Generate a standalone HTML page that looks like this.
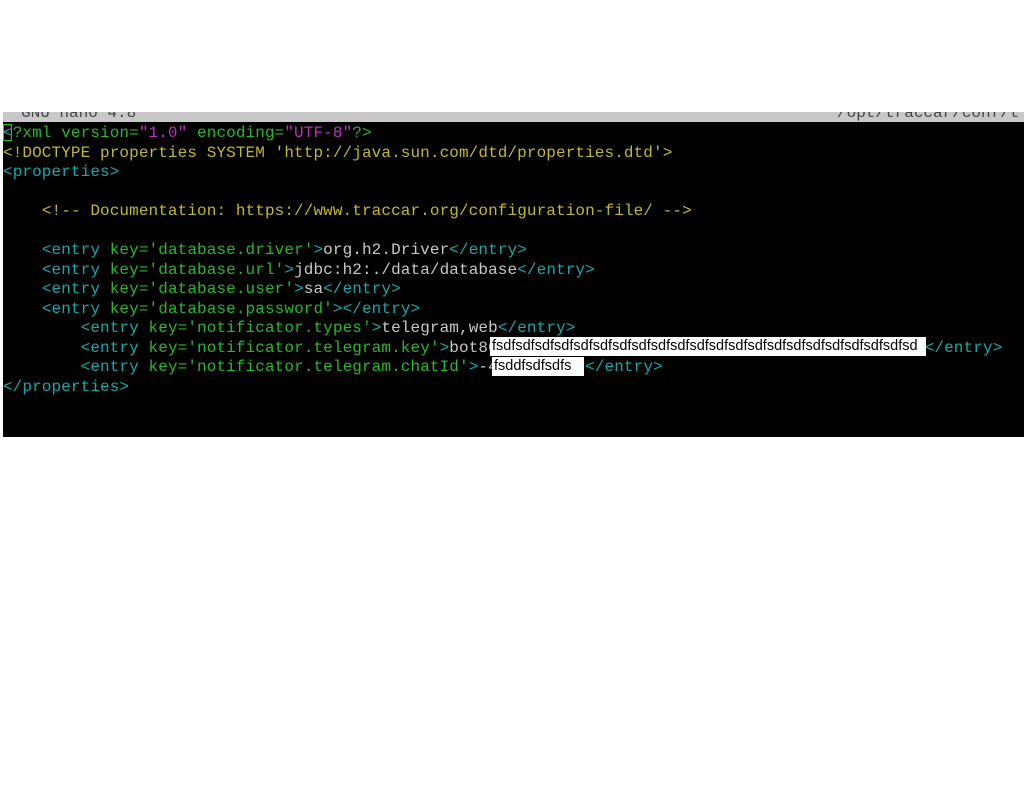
<!DOCTYPE html>
<html><head><meta charset="utf-8"><style>
body{margin:0;width:1024px;height:791px;background:#fff;position:relative;overflow:hidden}
#bar{position:absolute;left:3px;top:112px;width:1021px;height:10px;background:#c8c8c8;overflow:hidden}
#bar span{position:absolute;top:-8px;font:16px "Liberation Mono",monospace;color:#444}
#term{position:absolute;left:3px;top:122px;width:1021px;height:315px;background:#000}
pre{margin:0;position:absolute;left:3px;top:124px;font:16px/19.5px "Liberation Mono",monospace;letter-spacing:0.1px;color:#c8c8c8;white-space:pre}
.c{color:#18a8a8}.y{color:#c0b830}.g{color:#28b828}.m{color:#c030c0}.w{color:#c8c8c8}
.box{position:absolute;background:#fff;color:#000;font:14.5px/19px "Liberation Sans",sans-serif;padding-left:2px;overflow:hidden;white-space:nowrap;box-sizing:border-box}
#cur{position:absolute;left:3px;top:124px;width:9px;height:17px;border:1px solid #2c2;box-sizing:border-box}
</style></head><body>
<div id="bar"><span style="left:18px">GNU nano 4.8</span><span style="left:834px">/opt/traccar/conf/t</span></div>
<div id="term"></div>
<div id="cur"></div>
<pre><span class="c">&lt;</span><span class="g">?xml version=</span><span class="m">"1.0"</span><span class="g"> encoding=</span><span class="m">"UTF-8"</span><span class="g">?&gt;</span>
<span class="y">&lt;!DOCTYPE properties SYSTEM 'http://java.sun.com/dtd/properties.dtd'&gt;</span>
<span class="c">&lt;properties&gt;</span>

    <span class="y">&lt;!-- Documentation: https://www.traccar.org/configuration-file/ --&gt;</span>

    <span class="c">&lt;entry </span><span class="g">key='database.driver'</span><span class="c">&gt;</span>org.h2.Driver<span class="c">&lt;/entry&gt;</span>
    <span class="c">&lt;entry </span><span class="g">key='database.url'</span><span class="c">&gt;</span>jdbc:h2:./data/database<span class="c">&lt;/entry&gt;</span>
    <span class="c">&lt;entry </span><span class="g">key='database.user'</span><span class="c">&gt;</span>sa<span class="c">&lt;/entry&gt;</span>
    <span class="c">&lt;entry </span><span class="g">key='database.password'</span><span class="c">&gt;&lt;/entry&gt;</span>
        <span class="c">&lt;entry </span><span class="g">key='notificator.types'</span><span class="c">&gt;</span>telegram,web<span class="c">&lt;/entry&gt;</span>
        <span class="c">&lt;entry </span><span class="g">key='notificator.telegram.key'</span><span class="c">&gt;</span>bot80                                            <span class="c">&lt;/entry&gt;</span>
        <span class="c">&lt;entry </span><span class="g">key='notificator.telegram.chatId'</span><span class="c">&gt;</span>-4         <span class="c">&lt;/entry&gt;</span>
<span class="c">&lt;/properties&gt;</span></pre>
<div class="box" style="left:490px;top:337px;width:436px;height:19px">fsdfsdfsdfsdfsdfsdfsdfsdfsdfsdfsdfsdfsdfsdfsdfsdfsdfsdfsdfsdfsdfsd</div>
<div class="box" style="left:492px;top:357px;width:92px;height:19px">fsddfsdfsdfs</div>
</body></html>
